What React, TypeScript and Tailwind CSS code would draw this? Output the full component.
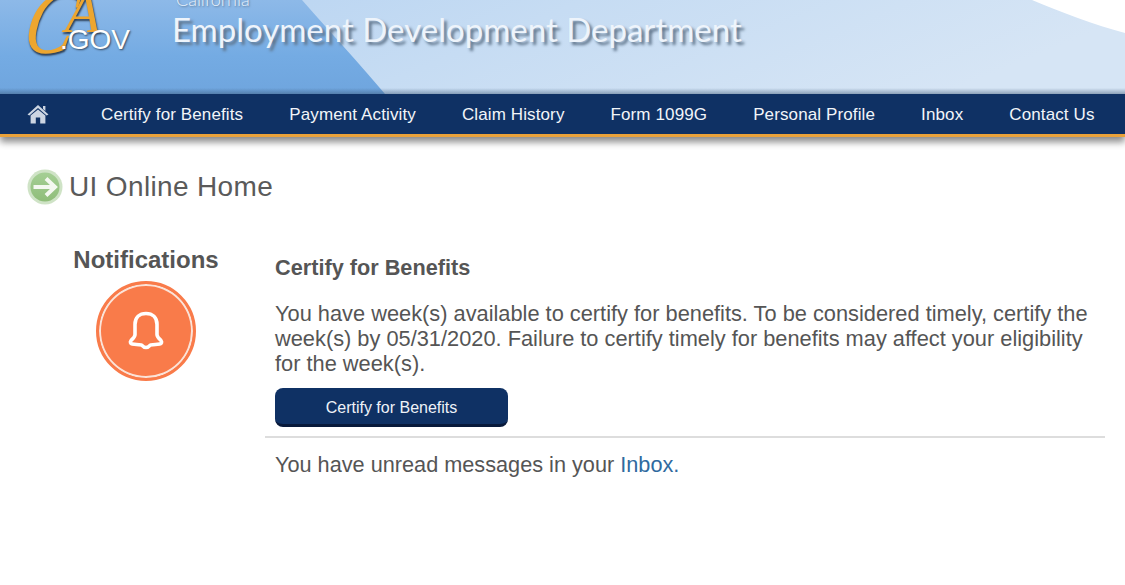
const navItems = ['Certify for Benefits', 'Payment Activity', 'Claim History', 'Form 1099G', 'Personal Profile', 'Inbox', 'Contact Us']

function HeaderArt() {
  return (
    <svg className="absolute inset-0 h-full w-full" viewBox="0 0 1125 94" preserveAspectRatio="none">
      <defs>
        <linearGradient id="leftBlue" x1="0" y1="0" x2="0" y2="1">
          <stop offset="0" stopColor="#8db9e8" />
          <stop offset="0.6" stopColor="#74abe3" />
          <stop offset="1" stopColor="#6fa5de" />
        </linearGradient>
        <linearGradient id="rightBlue" x1="0" y1="0" x2="1" y2="0.2">
          <stop offset="0" stopColor="#b3d1f1" />
          <stop offset="0.5" stopColor="#c6dcf3" />
          <stop offset="1" stopColor="#d6e5f5" />
        </linearGradient>
        <linearGradient id="navShade" x1="0" y1="0" x2="0" y2="1">
          <stop offset="0" stopColor="#34506f" stopOpacity="0" />
          <stop offset="1" stopColor="#34506f" stopOpacity="0.45" />
        </linearGradient>
      </defs>
      <rect width="1125" height="94" fill="url(#rightBlue)" />
      <path d="M0 0H302C330 32 360 64 385 94H0Z" fill="url(#leftBlue)" />
      <path d="M1032 0C1060 12 1095 25 1125 33V0Z" fill="#ffffff" />
      <rect y="88" width="1125" height="6" fill="url(#navShade)" />
    </svg>
  )
}

function HomeIcon() {
  return (
    <svg width="22" height="20" viewBox="0 0 22 20" className="shrink-0">
      <path d="M11 1 L21.5 10.5 L19.6 11.5 L11 4 L2.4 11.5 L0.5 10.5 Z" fill="#ccd5e2" />
      <path d="M16 2h2.4v5L16 5Z" fill="#ccd5e2" />
      <path d="M3.6 11.6 L11 5.4 L18.4 11.6 V19.6 H13.2 V13.4 H8.8 V19.6 H3.6 Z" fill="#ccd5e2" />
    </svg>
  )
}

function ArrowBadge() {
  return (
    <svg width="36" height="36" viewBox="0 0 36 36" className="shrink-0">
      <defs>
        <linearGradient id="badge" x1="0" y1="0" x2="0" y2="1">
          <stop offset="0" stopColor="#a5cf95" />
          <stop offset="1" stopColor="#8fbd79" />
        </linearGradient>
      </defs>
      <circle cx="18" cy="18" r="17.500" fill="#cfe3c6" />
      <circle cx="18" cy="18" r="14.500" fill="url(#badge)" />
      <path d="M6.5 18H27M19 9.5 L28 18 L19 26.5" fill="none" stroke="#f4f8f0" strokeWidth="4" />
    </svg>
  )
}

function BellBadge() {
  return (
    <div className="flex h-[100px] w-[100px] items-center justify-center rounded-full border-[3px] border-[#f97b4a] bg-[#f97b4a] shadow-[inset_0_0_0_2px_#fbe3d8]">
      <svg width="36" height="40" viewBox="0 0 36 40">
        <path
          d="M18 2.500c6.500 0 11 4 11 11v10c0 2.500 2 4 4 6 1.200 1.500 .6 3.200-1.200 3.500-3 .5-6 .8-9.300 1-1.500 1.600-3 2.500-4.500 2.500s-3-.9-4.500-2.500c-3.300-.2-6.300-.5-9.300-1-1.800-.3-2.400-2-1.200-3.500 2-2 4-3.500 4-6v-10c0-7 4.500-11 11-11Z"
          fill="none"
          stroke="#fff"
          strokeWidth="3.600"
          strokeLinejoin="round"
        />
      </svg>
    </div>
  )
}

export default function App() {
  return (
    <div className="h-[585px] w-[1125px] overflow-hidden bg-white font-['Liberation_Sans',Arial,sans-serif] text-[#555555]">
      <header className="relative h-[94px] overflow-hidden">
        <HeaderArt />
        <div className="relative flex h-full">
          <div className="relative ml-[27px] h-full w-[105px] shrink-0">
            <span className="absolute left-[0px] top-[-24px] origin-left scale-x-[0.8] -skew-x-[14deg] font-['Liberation_Serif',serif] text-[92px] italic leading-none text-[#eda62f] [text-shadow:1px_2px_2px_#2c3e55]">
              C
            </span>
            <span className="absolute left-[38px] top-[-16px] font-['Liberation_Serif',serif] text-[58px] italic leading-none text-[#eda62f] [text-shadow:1px_2px_2px_#2c3e55]">
              A
            </span>
            <span className="absolute left-[33px] top-[26px] text-[28px] leading-none text-white [text-shadow:1px_1px_2px_#33475f]">
              .GOV
            </span>
          </div>
          <div className="ml-[40px] flex flex-col">
            <span className="mt-[-10px] ml-[4px] h-[18px] font-['Lato',sans-serif] text-[18px] font-light leading-[18px] text-[#e6f0fb] [text-shadow:1px_1px_2px_#5a7896]">
              California
            </span>
            <span className="font-['Lato',sans-serif] text-[33px] leading-[42px] text-[#eef4fb] [text-shadow:3px_3px_3px_#5d7288]">
              Employment Development Department
            </span>
          </div>
        </div>
      </header>

      <nav className="flex h-[43px] items-center border-b-[3px] border-[#eaa23a] bg-[#0f3164] pl-[27px] text-[17px] tracking-[0.12px] text-[#f2f5f9] shadow-[0_5px_7px_#8a8a8a]">
        <HomeIcon />
        <ul className="ml-[52px] flex gap-[46px] whitespace-nowrap pt-[2px]">
          {navItems.map(item => (
            <li key={item}>{item}</li>
          ))}
        </ul>
      </nav>

      <div className="ml-[27px] mt-[32px] flex items-center gap-[6px]">
        <ArrowBadge />
        <h1 className="text-[28px] leading-[34px] tracking-[0.35px] text-[#5a5a5a]">UI Online Home</h1>
      </div>

      <main className="mt-[41px] flex">
        <section className="flex w-[265px] shrink-0 flex-col items-center pr-[13px] pl-[40px]">
          <h2 className="text-[24px] font-bold leading-[28px] whitespace-nowrap">Notifications</h2>
          <div className="mt-[7px]">
            <BellBadge />
          </div>
        </section>
        <section className="w-[840px] pt-[10px]">
          <div className="px-[10px] pb-[9px]">
            <h3 className="text-[21.7px] font-bold leading-[24px]">Certify for Benefits</h3>
            <p className="mt-[21px] text-[21.8px] leading-[25px]">
              You have week(s) available to certify for benefits. To be considered timely, certify the week(s) by 05/31/2020. Failure to certify timely for benefits may affect your eligibility for the week(s).
            </p>
            <button className="mt-[12px] block h-[39px] w-[233px] rounded-[8px] border-b-[3px] border-[#08193a] bg-[#0f3164] pt-[3px] text-[16px] text-[#eef2f8]">
              Certify for Benefits
            </button>
          </div>
          <div className="border-t-2 border-[#dddddd] px-[10px] pt-[14px] text-[21.7px] leading-[25px]">
            You have unread messages in your <a className="text-[#2f6a9f]">Inbox.</a>
          </div>
        </section>
      </main>
    </div>
  )
}
